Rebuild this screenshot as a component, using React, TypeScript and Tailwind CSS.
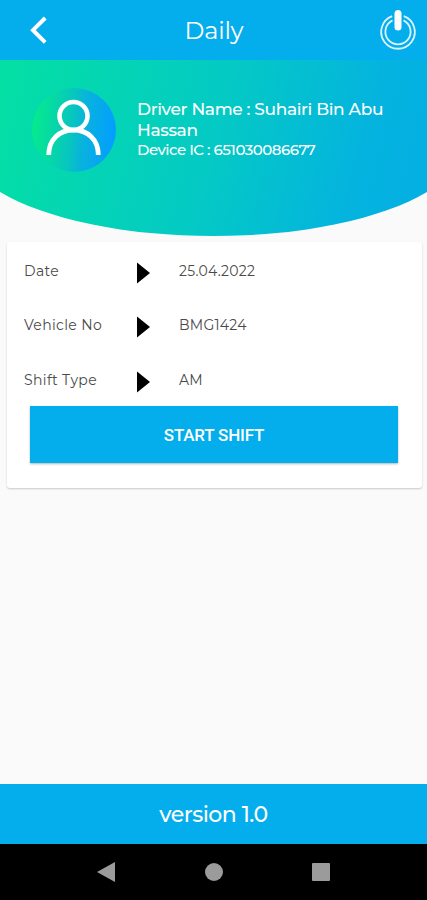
const shiftDetails = [
  { label: "Date", value: "25.04.2022" },
  { label: "Vehicle No", value: "BMG1424" },
  { label: "Shift Type", value: "AM" },
];

function PowerIcon() {
  return (
    <svg width="36" height="42" viewBox="0 0 36 42" fill="none" stroke="#d9f3ff">
      <path d="M12.2 7.2A16.8 16.8 0 1 0 23.8 7.2" strokeWidth="1.8" />
      <path d="M12.5 11.4A12.6 12.6 0 1 0 23.5 11.4" strokeWidth="1.8" />
      <path d="M18 4.5V18" stroke="white" strokeWidth="7" strokeLinecap="round" />
    </svg>
  );
}

function Avatar() {
  return (
    <svg width="84" height="84" viewBox="0 0 84 84" fill="none">
      <defs>
        <linearGradient id="avatar" x1="0" y1="0.4" x2="1" y2="0.5">
          <stop offset="0" stopColor="#05ec8b" />
          <stop offset="0.48" stopColor="#07c5c0" />
          <stop offset="0.62" stopColor="#08b3dd" />
          <stop offset="1" stopColor="#039dff" />
        </linearGradient>
      </defs>
      <circle cx="42" cy="42" r="42" fill="url(#avatar)" />
      <circle cx="41.5" cy="28" r="14" stroke="white" strokeWidth="4.6" />
      <path d="M16.7 67C16.7 51 28 42 41.5 42S66.3 51 66.3 67" stroke="white" strokeWidth="4.8" />
    </svg>
  );
}

export default function App() {
  return (
    <div className="flex h-[900px] w-full flex-col overflow-hidden bg-[#fafafa] font-['Montserrat','Inter',sans-serif]">
      <header className="flex h-[60px] shrink-0 items-center justify-between bg-[#04adec] pr-[11px] pl-[30px] text-white">
        <svg width="18" height="28" viewBox="0 0 18 28" fill="none" stroke="white" strokeWidth="4">
          <path d="M15.2 2L3 14.2L15.2 26.4" />
        </svg>
        <h1 className="pt-0.5 text-2xl tracking-[-0.2px]">Daily</h1>
        <PowerIcon />
      </header>

      <section className="relative h-[182px] shrink-0">
        <svg className="absolute inset-0" width="100%" height="178" viewBox="0 0 427 178" preserveAspectRatio="none">
          <defs>
            <linearGradient id="banner" gradientUnits="userSpaceOnUse" x1="0" y1="40" x2="410" y2="150">
              <stop offset="0" stopColor="#04dfa5" />
              <stop offset="0.5" stopColor="#04cac4" />
              <stop offset="0.85" stopColor="#04b4de" />
              <stop offset="1" stopColor="#04afe2" />
            </linearGradient>
          </defs>
          <path d="M0 0H427V132A252 94 0 0 1 0 132Z" fill="url(#banner)" />
        </svg>
        <div className="relative flex gap-[21px] pt-7 pl-8">
          <Avatar />
          <div className="pt-[11px] text-white">
            <p className="w-[260px] text-[17px] leading-[21px] font-medium tracking-[-0.35px]">
              Driver Name : Suhairi Bin Abu Hassan
            </p>
            <p className="text-[15px] leading-[18px] font-medium tracking-[-0.5px]">Device IC : 651030086677</p>
          </div>
        </div>
      </section>

      <main className="flex-1 pr-[5px] pl-[7px]">
        <div className="h-[246px] rounded-[3px] bg-white shadow-[0_1px_2px_rgba(0,0,0,0.2)]">
          {shiftDetails.map((row) => (
            <div key={row.label} className="flex h-[54.4px] items-start pt-[19px] pl-[17px] text-[14px] leading-5 text-[#4a4a4a]">
              <span className="w-[113px] tracking-[0.35px]">{row.label}</span>
              <svg className="mt-px" width="13" height="22" viewBox="0 0 13 22">
                <path d="M0 0.5L13 11L0 21.5Z" fill="black" />
              </svg>
              <span className="pl-[29px] tracking-[0.25px]">{row.value}</span>
            </div>
          ))}
          <button className="mt-px mx-[23px] flex h-[57px] w-[368px] items-center justify-center bg-[#04adec] pt-[2px] font-[Roboto] text-[17px] font-medium tracking-[-0.2px] text-white shadow-[0_1px_2px_rgba(0,0,0,0.3)]">
            START SHIFT
          </button>
        </div>
      </main>

      <footer className="shrink-0">
        <div className="flex h-[60px] items-center justify-center bg-[#04adec] text-[22px] font-medium tracking-[-0.5px] text-white">
          version 1.0
        </div>
        <div className="flex h-14 items-center justify-between bg-black px-[97px]">
          <svg width="18" height="20" viewBox="0 0 18 20" fill="#9b9b9b">
            <path d="M18 0V20L0 10Z" />
          </svg>
          <div className="size-[18px] rounded-full bg-[#9b9b9b]" />
          <div className="size-[18px] rounded-[1px] bg-[#9b9b9b]" />
        </div>
      </footer>
    </div>
  );
}
